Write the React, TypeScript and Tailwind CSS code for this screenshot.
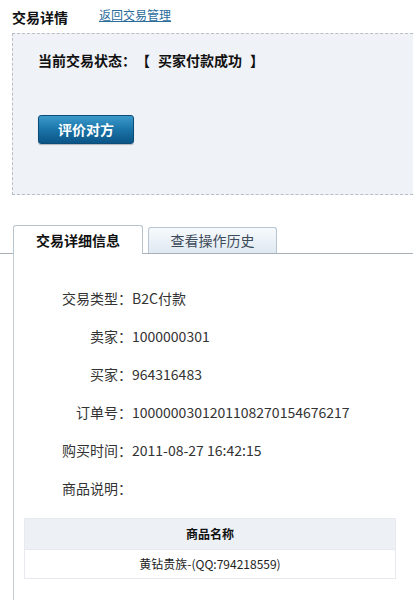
// App.tsx — 交易详情 page: status box, tabs and detail list.

const FONT = '[font-family:"Noto_Sans_CJK_SC","Noto_Sans",sans-serif]';

/* ------------------------------------------------------------------ */
/*  Data                                                               */
/* ------------------------------------------------------------------ */

const DETAILS: { label: string; value: string }[] = [
  { label: '交易类型：', value: 'B2C付款' },
  { label: '卖家：', value: '1000000301' },
  { label: '买家：', value: '964316483' },
  { label: '订单号：', value: '1000000301201108270154676217' },
  { label: '购买时间：', value: '2011-08-27 16:42:15' },
  { label: '商品说明：', value: '' },
];

/* ------------------------------------------------------------------ */
/*  Pieces                                                             */
/* ------------------------------------------------------------------ */

function StatusBox() {
  return (
    <div className="ml-[12px] h-[162px] border border-r-0 border-dashed border-[#b9bec4] bg-[#eff2f6] pl-[25px] pt-[17px]">
      <p className="flex text-[14px] font-bold leading-[18px] text-[#111]">
        <span>当前交易状态：</span>
        <span>【</span>
        <span className="mx-[8px]">买家付款成功</span>
        <span>】</span>
      </p>
      <button
        type="button"
        className="mt-[46px] flex h-[29px] w-[96px] items-center justify-center rounded-[3px] border border-[#0b4d78] bg-gradient-to-b from-[#3b9acb] via-[#1a74a8] to-[#0c5587] text-[14px] font-bold text-white shadow-[0_1px_1px_rgba(0,0,0,0.25)]"
      >
        评价对方
      </button>
    </div>
  );
}

function Tabs() {
  return (
    <div className="mt-[30px] flex items-end border-b border-[#a7b0b8] pl-[13px]">
      <div className="relative -mb-px flex h-[29px] w-[130px] items-center justify-center rounded-t-[3px] border border-b-0 border-[#b7c3cd] bg-white text-[14px] font-bold text-[#111]">
        交易详细信息
      </div>
      <div className="ml-[5px] flex h-[26px] w-[129px] items-center justify-center rounded-t-[3px] border border-b-0 border-[#b7c6d2] bg-gradient-to-b from-[#f7fafc] to-[#dfe9f1] text-[14px] text-[#3d4a5a]">
        查看操作历史
      </div>
    </div>
  );
}

function DetailRow({ label, value }: { label: string; value: string }) {
  return (
    <div className="flex h-[38px] items-center text-[14px] text-[#333]">
      <span className="w-[118px] text-right">{label}</span>
      <span>{value}</span>
    </div>
  );
}

function GoodsTable() {
  return (
    <div className="ml-[10px] mt-[11px] w-[372px] border border-[#e6e9ed] text-[12px]">
      <div className="flex h-[30px] items-center justify-center bg-[#edf0f4] font-bold text-[#111]">商品名称</div>
      <div className="flex h-[29px] items-center justify-center border-t border-[#e6e9ed] bg-white text-[#222]">
        黄钻贵族-(QQ:794218559)
      </div>
    </div>
  );
}

/* ------------------------------------------------------------------ */
/*  Main Component                                                     */
/* ------------------------------------------------------------------ */

export default function App() {
  return (
    <div className={`${FONT} h-[600px] w-[413px] overflow-hidden bg-white`}>
      {/* Header */}
      <div className="flex h-[33px] items-start pl-[12px] pt-[7px]">
        <h1 className="text-[14px] font-bold leading-[20px] text-[#111]">交易详情</h1>
        <a href="#" className="ml-[31px] mt-[-2px] text-[12px] leading-[20px] text-[#2b6c9c] underline">
          返回交易管理
        </a>
      </div>

      <StatusBox />
      <Tabs />

      {/* Detail panel */}
      <div className="ml-[13px] min-h-[400px] border-l border-[#c3cdd6] pt-[25px]">
        {DETAILS.map((d) => (
          <DetailRow key={d.label} label={d.label} value={d.value} />
        ))}
        <GoodsTable />
      </div>
    </div>
  );
}
